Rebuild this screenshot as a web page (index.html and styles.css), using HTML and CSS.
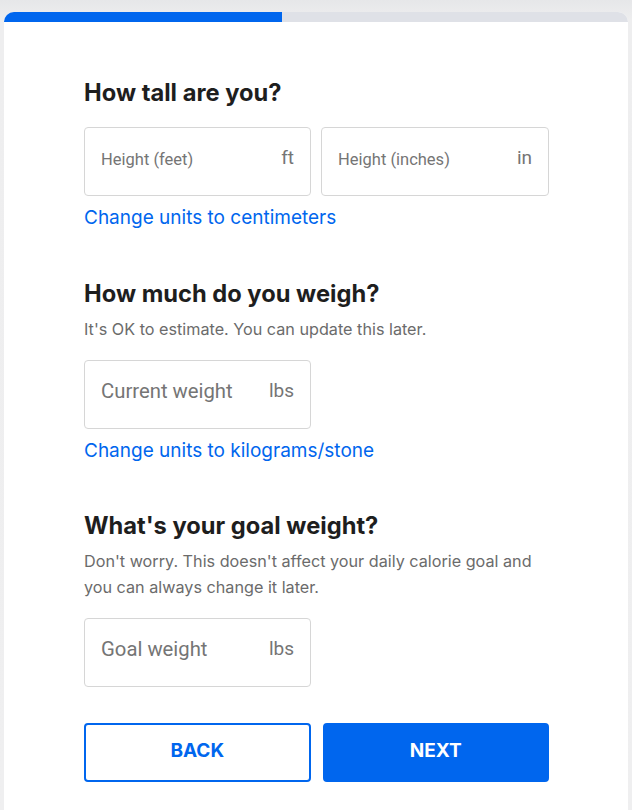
FILE: index.html
```html
<!DOCTYPE html>
<html lang="en">
<head>
<meta charset="utf-8">
<title>Height and weight</title>
<link rel="stylesheet" href="styles.css">
</head>
<body>
<div class="card">
  <div class="progress"><div class="progress-fill" style="width:44.6%"></div></div>
  <form class="form">
    <section class="section">
      <h2 class="title">How tall are you?</h2>
      <div class="row">
        <label class="field field-sm"><span class="ph">Height (feet)</span><span class="unit">ft</span></label>
        <label class="field field-sm"><span class="ph">Height (inches)</span><span class="unit">in</span></label>
      </div>
      <a class="link" href="#">Change units to centimeters</a>
    </section>
    <section class="section">
      <h2 class="title">How much do you weigh?</h2>
      <p class="hint">It's OK to estimate. You can update this later.</p>
      <div class="row">
        <label class="field"><span class="ph">Current weight</span><span class="unit">lbs</span></label>
      </div>
      <a class="link" href="#">Change units to kilograms/stone</a>
    </section>
    <section class="section">
      <h2 class="title">What's your goal weight?</h2>
      <p class="hint">Don't worry. This doesn't affect your daily calorie goal and you can always change it later.</p>
      <div class="row">
        <label class="field"><span class="ph">Goal weight</span><span class="unit">lbs</span></label>
      </div>
    </section>
    <div class="actions">
      <button type="button" class="btn btn-outline">BACK</button>
      <button type="button" class="btn btn-solid">NEXT</button>
    </div>
  </form>
</div>
</body>
</html>
```
FILE: styles.css
```css
html, body {
  margin: 0;
  padding: 0;
}
body {
  background: linear-gradient(#e6e7e9, #eeeeef 20px, #efeff0);
  min-height: 810px;
  font-family: "Inter", "Liberation Sans", sans-serif;
}
.card {
  margin: 12px 4px 0;
  background: #fff;
  border-radius: 10px 10px 0 0;
  overflow: hidden;
  min-height: 798px;
}
.progress {
  height: 10px;
  background: #dfe1e7;
}
.progress-fill {
  height: 100%;
  background: #0066ee;
}
.form {
  padding: 57px 79px 0 80px;
  display: flex;
  flex-direction: column;
}
.section {
  display: flex;
  flex-direction: column;
  margin-bottom: 49px;
}
.section + .section {
  margin-bottom: 48px;
}
.section:last-of-type {
  margin-bottom: 36px;
}
.title {
  margin: 0;
  font-size: 23.7px;
  line-height: 28px;
  font-weight: 700;
  color: #1e1e1e;
}
.hint {
  margin: 8px 0 0;
  font-size: 16.2px;
  line-height: 26px;
  color: #6b6b6b;
}
.row {
  display: flex;
  gap: 10px;
  margin-top: 18px;
}
.title + .row {
  margin-top: 20px;
}
.field {
  box-sizing: border-box;
  width: 227px;
  height: 69px;
  border: 1px solid #d6d6d6;
  border-radius: 4px;
  display: flex;
  align-items: flex-start;
  justify-content: space-between;
  padding: 18px 16px 0 16px;
  font-family: "Roboto", "Liberation Sans", sans-serif;
  color: #757575;
}
.field + .field {
  width: 228px;
}
.field .ph {
  font-size: 20.3px;
  line-height: 24px;
}
.field .unit {
  font-size: 19px;
  line-height: 24px;
}
.field-sm .ph {
  font-size: 16.5px;
  line-height: 22px;
  margin-top: 3px;
}
.link {
  margin-top: 9px;
  font-size: 19px;
  line-height: 26px;
  color: #0066ee;
  text-decoration: none;
  align-self: flex-start;
}
.actions {
  display: flex;
  gap: 12px;
}
.btn {
  box-sizing: border-box;
  flex: 1;
  height: 59px;
  padding: 0 0 5px;
  border-radius: 4px;
  font-family: "Inter", "Liberation Sans", sans-serif;
  font-size: 19px;
  font-weight: 700;
  cursor: pointer;
}
.btn-outline {
  background: #fff;
  border: 2px solid #0066ee;
  color: #0066ee;
}
.btn-solid {
  background: #0066ee;
  border: 2px solid #0066ee;
  color: #fff;
}
```
